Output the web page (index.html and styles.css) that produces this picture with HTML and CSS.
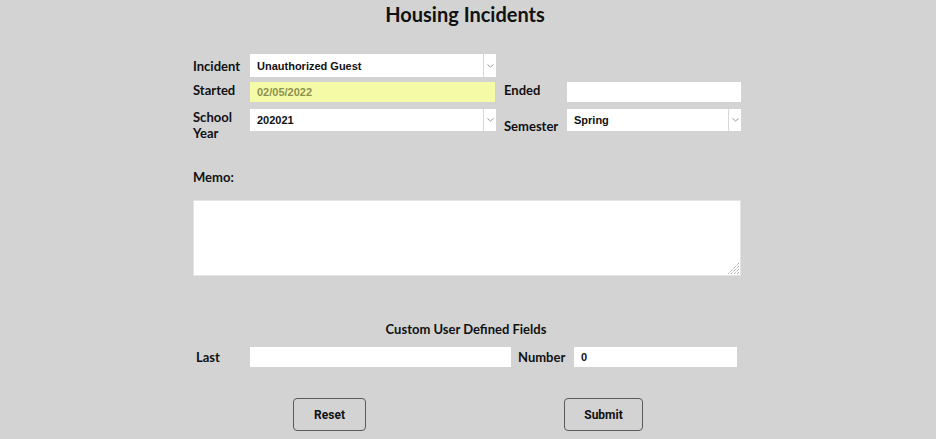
FILE: index.html
```html
<!DOCTYPE html>
<html>
<head>
<meta charset="utf-8">
<link rel="stylesheet" href="styles.css">
</head>
<body>
<div class="page">
  <h1 class="title">Housing Incidents</h1>
  <div class="grid">
    <label class="lbl lbl-mid">Incident</label>
    <div class="select sel-incident"><span class="val">Unauthorized Guest</span><span class="arrow"><svg width="7" height="4" viewBox="0 0 7 4"><path d="M0.5 0.5 L3.5 3 L6.5 0.5" fill="none" stroke="#999" stroke-width="1"/></svg></span></div>
    <div class="empty"></div>
    <div class="empty"></div>

    <label class="lbl lbl-mid">Started</label>
    <div class="input date r-end"><span class="val">02/05/2022</span></div>
    <label class="lbl lbl-mid pad">Ended</label>
    <div class="input r-end"></div>

    <label class="lbl lbl-top">School<br>Year</label>
    <div class="select r-end"><span class="val">202021</span><span class="arrow"><svg width="7" height="4" viewBox="0 0 7 4"><path d="M0.5 0.5 L3.5 3 L6.5 0.5" fill="none" stroke="#999" stroke-width="1"/></svg></span></div>
    <label class="lbl lbl-end pad">Semester</label>
    <div class="select r-end"><span class="val">Spring</span><span class="arrow"><svg width="7" height="4" viewBox="0 0 7 4"><path d="M0.5 0.5 L3.5 3 L6.5 0.5" fill="none" stroke="#999" stroke-width="1"/></svg></span></div>
  </div>

  <div class="memo-label">Memo:</div>
  <div class="memo-wrap">
    <textarea class="memo"></textarea>
    <svg class="grip" width="13" height="13" viewBox="0 0 13 13">
      <path d="M12 1 L1 12 M12 4 L4 12 M12 7 L7 12 M12 10 L10 12" stroke="#8a8a8a" stroke-width="1" fill="none" stroke-dasharray="1 1"/>
    </svg>
  </div>

  <div class="custom-title">Custom User Defined Fields</div>
  <div class="custom-row">
    <label class="lbl last-lbl">Last</label>
    <div class="input last-input"></div>
    <label class="lbl num-lbl">Number</label>
    <div class="input num-input"><span class="val">0</span></div>
  </div>

  <div class="buttons">
    <button class="btn reset">Reset</button>
    <button class="btn submit">Submit</button>
  </div>
</div>
</body>
</html>
```

FILE: styles.css
```css
html, body {
  margin: 0;
  padding: 0;
  background: #d3d3d3;
}
body {
  width: 936px;
  height: 439px;
  overflow: hidden;
  font-family: "Lato", "Liberation Sans", sans-serif;
  color: #111;
}
.page {
  width: 548px;
  margin: 0 0 0 193px;
}
.title {
  margin: 0;
  text-align: center;
  font-size: 20px;
  line-height: 30px;
  font-weight: 700;
  position: relative;
  left: -2px;
  top: -1px;
}
.grid {
  margin-top: 24px;
  display: grid;
  grid-template-columns: 57px 246px 71px 174px;
  grid-template-rows: 23px 25px 29px;
  width: 548px;
}
.lbl {
  font-size: 13px;
  font-weight: 700;
  line-height: 16px;
  white-space: nowrap;
}
.lbl-mid { align-self: center; }
.lbl-top { align-self: start; padding-top: 7px; }
.lbl-end { align-self: end; margin-bottom: -3px; }
.pad { padding-left: 8px; }
.r-end { align-self: end; }
.select {
  background: #fff;
  height: 22px;
  display: flex;
  align-items: stretch;
  box-sizing: border-box;
}
.sel-incident {
  height: 23px;
  width: 246px;
}
.val {
  flex: 1;
  font-family: "Liberation Sans", Arial, sans-serif;
  font-size: 11px;
  font-weight: 700;
  padding-left: 7px;
  display: flex;
  align-items: center;
  color: #111;
}
.arrow {
  width: 12px;
  border-left: 1px solid #d8d8d8;
  display: flex;
  align-items: center;
  justify-content: center;
}
.input {
  background: #fff;
  height: 20px;
  display: flex;
  box-sizing: border-box;
}
.date {
  background: #f5faa6;
  width: 245px;
}
.date .val {
  color: #8c9150;
}
.memo-label {
  margin-top: 38px;
  font-size: 13px;
  font-weight: 700;
  line-height: 16px;
}
.memo-wrap {
  position: relative;
  margin-top: 15px;
  width: 548px;
  height: 76px;
}
.memo {
  display: block;
  width: 548px;
  height: 76px;
  box-sizing: border-box;
  border: 1px solid #e4e4e4;
  background: #fff;
  padding: 0;
  resize: none;
}
.grip {
  position: absolute;
  right: 1px;
  bottom: 1px;
}
.custom-title {
  margin-top: 45px;
  text-align: center;
  font-size: 13px;
  font-weight: 700;
  line-height: 16px;
  position: relative;
  left: -1px;
}
.custom-row {
  margin-top: 10px;
  display: flex;
  align-items: center;
  height: 20px;
}
.last-lbl {
  width: 54px;
  padding-left: 3px;
}
.last-input {
  width: 261px;
}
.num-lbl {
  width: 63px;
  padding-left: 7px;
  box-sizing: border-box;
}
.num-input {
  width: 163px;
}
.buttons {
  margin-top: 31px;
  display: flex;
  padding-left: 100px;
  gap: 198px;
}
.btn {
  height: 33px;
  background: #d3d3d3;
  border: 1px solid #5a5a5a;
  border-radius: 4px;
  font-family: "Roboto", "Liberation Sans", sans-serif;
  font-size: 12px;
  font-weight: 700;
  color: #111;
  padding: 0;
}
.reset { width: 73px; }
.submit { width: 79px; }
```
